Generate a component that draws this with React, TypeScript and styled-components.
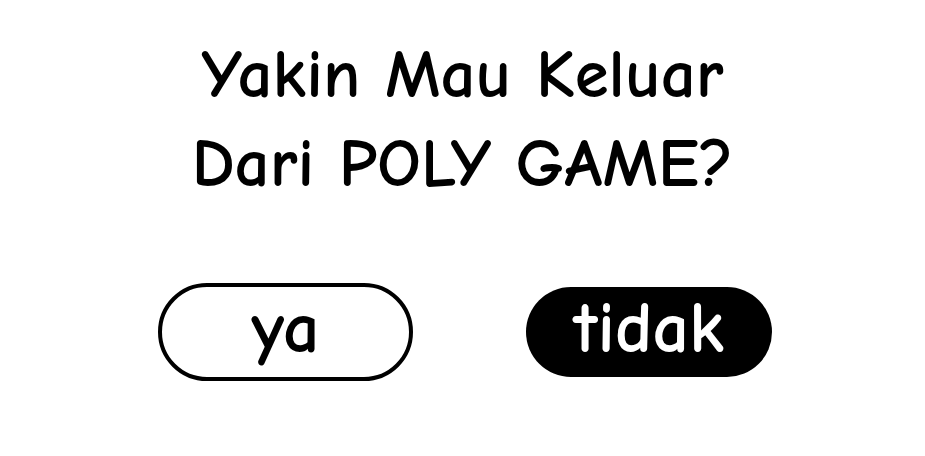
import React from "react";
import styled, { createGlobalStyle } from "styled-components";

const Global = createGlobalStyle`
  html, body { margin: 0; padding: 0; background: #fff; }
  body { font-family: "Comic Sans MS", "Comic Neue", "DejaVu Sans", sans-serif; }
`;

const Page = styled.div`
  width: 925px;
  height: 456px;
  display: flex;
  flex-direction: column;
  align-items: center;
  box-sizing: border-box;
  padding-top: 30px;
`;

const Title = styled.h1`
  margin: 0;
  font-size: 69px;
  font-weight: bold;
  line-height: 89px;
  text-align: center;
  color: #000;
`;

const Row = styled.div`
  display: flex;
  align-items: center;
  gap: 113px;
  margin-top: 75px;
  margin-left: 5px;
`;

const Button = styled.button<{ $filled?: boolean; $w: number; $h: number }>`
  width: ${(p) => p.$w}px;
  height: ${(p) => p.$h}px;
  box-sizing: border-box;
  border-radius: 999px;
  border: ${(p) => (p.$filled ? "none" : "4px solid #000")};
  background: ${(p) => (p.$filled ? "#000" : "#fff")};
  color: ${(p) => (p.$filled ? "#fff" : "#000")};
  font-family: inherit;
  font-size: 72px;
  font-weight: bold;
  line-height: 1;
  padding: 0 0 6px;
  display: flex;
  align-items: center;
  justify-content: center;
  cursor: pointer;
`;

export default function App() {
  return (
    <Page>
      <Global />
      <Title>
        Yakin Mau Keluar
        <br />
        Dari POLY GAME?
      </Title>
      <Row>
        <Button $w={255} $h={98}>ya</Button>
        <Button $filled $w={246} $h={90}>tidak</Button>
      </Row>
    </Page>
  );
}
